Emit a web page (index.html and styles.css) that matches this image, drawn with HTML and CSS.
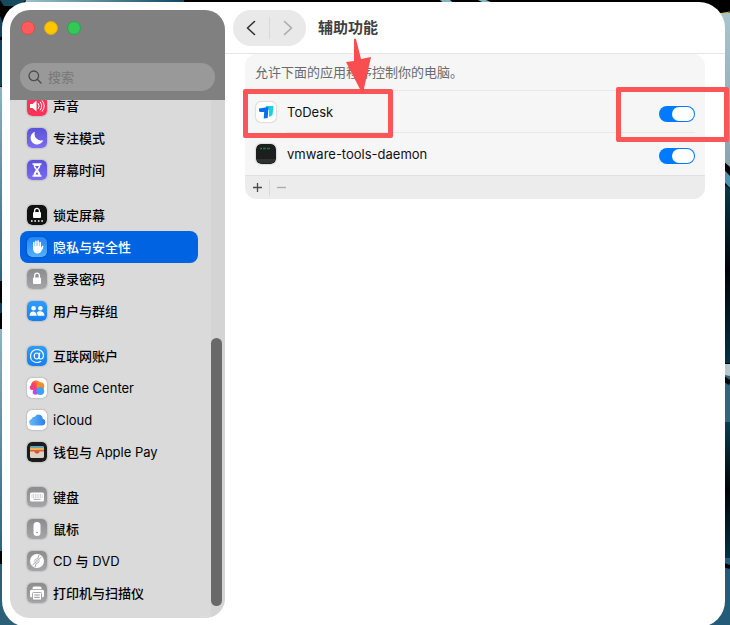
FILE: index.html
```html
<!DOCTYPE html>
<html lang="zh-CN">
<head>
<meta charset="utf-8">
<meta name="viewport" content="width=device-width, initial-scale=1">
<title>辅助功能</title>
<link rel="stylesheet" href="styles.css">
</head>
<body>
<svg class="wallpaper" aria-hidden="true" viewBox="0 0 730 625" preserveAspectRatio="none">
  <defs>
    <linearGradient id="wl" x1="0" y1="0" x2="0" y2="1"><stop offset="0" stop-color="#8fb3c0"/><stop offset="1" stop-color="#2b6480"/></linearGradient>
    <linearGradient id="wr" x1="0" y1="0" x2="0" y2="1"><stop offset="0" stop-color="#a9c4cd"/><stop offset="1" stop-color="#8aa3af"/></linearGradient>
    <linearGradient id="wd" x1="0" y1="0" x2="0" y2="1"><stop offset="0" stop-color="#0b3c50"/><stop offset=".5" stop-color="#000305"/><stop offset="1" stop-color="#063044"/></linearGradient>
    <linearGradient id="wt" x1="0" y1="0" x2="1" y2="0"><stop offset="0" stop-color="#9cc2cc"/><stop offset="1" stop-color="#0d4763"/></linearGradient>
    <linearGradient id="grey" x1="0" y1="0" x2="0" y2="1"><stop offset="0" stop-color="#8c8c8e"/><stop offset="1" stop-color="#a6a6a8"/></linearGradient>
    <linearGradient id="purple" x1="0" y1="0" x2="0" y2="1"><stop offset="0" stop-color="#5a52d8"/><stop offset="1" stop-color="#7c6cf2"/></linearGradient>
    <linearGradient id="blue" x1="0" y1="0" x2="0" y2="1"><stop offset="0" stop-color="#2f9cfb"/><stop offset="1" stop-color="#1480f0"/></linearGradient>
    <linearGradient id="sky" x1="0" y1="0" x2="0" y2="1"><stop offset="0" stop-color="#1f86f6"/><stop offset="1" stop-color="#56b0fd"/></linearGradient>
  </defs>
  <rect width="730" height="625" fill="#000"/>
  <path d="M0 0h26L18 6H4z" fill="#174a5e"/>
  <path d="M26 0h158v6H24z" fill="url(#wt)"/>
  <path d="M440 0h10l6 5h-10zM478 0h8l12 5h-10z" fill="#7fb4c2"/>
  <path d="M0 16q5 8 2 21H0zM0 40h6v46H0z" fill="#11455c"/>
  <path d="M0 87h8v194H0z" fill="url(#wl)"/>
  <path d="M0 303h8v10H0z" fill="#0a4257"/>
  <path d="M0 329h8v222H0z" fill="url(#wl)"/>
  <path d="M0 564h40v61H0z" fill="#2c6079"/>
  <path d="M715 13h15v154l-15-13z" fill="url(#wr)"/>
  <path d="M718 14l12-2" stroke="#c9c043"/>
  <path d="M715 160l15 16v12l-15-16z" fill="#4c96ae"/>
  <path d="M715 177l15 12v174h-15z" fill="url(#wd)"/>
  <path d="M715 364h15v58h-15z" fill="#38627a"/>
  <path d="M715 364h15v12l-15-3z" fill="#b7c9cf"/>
  <path d="M715 373l15 10" stroke="#02080c" stroke-width="5"/>
  <path d="M715 422h15v136h-15z" fill="url(#wd)"/>
  <path d="M700 558h30v67h-30z" fill="#245b78"/>
  <path d="M715 562l15 5" stroke="#000" stroke-width="4"/>
</svg>

<div class="window">
  <aside class="sidebar">
    <header class="sidebar-head">
      <div class="lights">
        <button class="light close" aria-label="关闭"></button>
        <button class="light minimize" aria-label="最小化"></button>
        <button class="light expand" aria-label="全屏"></button>
      </div>
      <label class="search">
        <svg width="14" height="14" viewBox="0 0 14 14" fill="none" stroke="#4c4c4c" stroke-width="1.3" stroke-linecap="round" aria-hidden="true"><circle cx="5.8" cy="5.8" r="4.8"/><path d="M9.3 9.3L13 13"/></svg>
        <input type="search" placeholder="搜索" aria-label="搜索">
      </label>
    </header>
    <nav class="nav">
      <div class="group">
        <a class="item" href="#"><svg class="icon" viewBox="0 0 20 20" aria-hidden="true"><rect width="20" height="20" rx="5" fill="#fb3359"/><path d="M3 8h2.5L9.5 4.5v11L5.500 12H3z" fill="#fff"/><path d="M11.300 7.500q2 2.500 0 5M13.300 6q3 4 0 8M15.300 4.800q4 5.200 0 10.400" fill="none" stroke="#fff" stroke-width="1" stroke-linecap="round"/></svg>声音</a>
        <a class="item" href="#"><svg class="icon" viewBox="0 0 20 20" aria-hidden="true"><rect width="20" height="20" rx="5" fill="url(#purple)"/><path d="M8 3.800A6.500 6.500 0 1 0 16.200 12.200 6.500 6.500 0 0 1 8 3.800z" fill="#fff"/></svg>专注模式</a>
        <a class="item" href="#"><svg class="icon" viewBox="0 0 20 20" aria-hidden="true"><rect width="20" height="20" rx="5" fill="url(#purple)"/><path d="M6 4h8M6 16h8" stroke="#fff" stroke-width="1.500" stroke-linecap="round"/><path d="M6.500 4h7c0 3-1 4-2.500 6 1.500 2 2.500 3 2.500 6h-7c0-3 1-4 2.500-6C7.500 8 6.500 7 6.500 4z" fill="#fff"/><path d="M8 6h4L10 9zM10 12l1.500 2.500h-3z" fill="#6557e0"/></svg>屏幕时间</a>
      </div>
      <div class="group">
        <a class="item" href="#"><svg class="icon" viewBox="0 0 20 20" aria-hidden="true"><rect width="20" height="20" rx="5" fill="#111"/><path d="M7.600 7.500V5.800a2.400 2.400 0 0 1 4.800 0v1.700" fill="none" stroke="#fff" stroke-width="1.300"/><rect x="6" y="7" width="8" height="6" rx="1" fill="#fff"/><path d="M4 16h1.600M7.400 16H9M10.900 16h1.600M14.300 16h1.600" stroke="#fff" stroke-width="1.600"/></svg>锁定屏幕</a>
        <a class="item selected" href="#" aria-current="page"><svg class="icon" viewBox="0 0 20 20" aria-hidden="true"><rect width="20" height="20" rx="5" fill="url(#sky)"/><path d="M6.800 10V5.800M8.900 9V4.200M11.100 9V4M13.200 10V5.500M15 11.500l.6-2" stroke="#fff" stroke-width="1.600" stroke-linecap="round"/><path d="M6 9h8v2l1.800-1.500c-.4 3.500-1.800 7-5.300 7C7.500 16.500 6 14 6 11z" fill="#fff"/></svg>隐私与安全性</a>
        <a class="item" href="#"><svg class="icon" viewBox="0 0 20 20" aria-hidden="true"><rect width="20" height="20" rx="5" fill="url(#grey)"/><path d="M7.600 9V6.500a2.400 2.400 0 0 1 4.800 0V9" fill="none" stroke="#fff" stroke-width="1.300"/><rect x="6" y="8.500" width="8" height="6.500" rx="1" fill="#fff"/></svg>登录密码</a>
        <a class="item" href="#"><svg class="icon" viewBox="0 0 20 20" aria-hidden="true"><rect width="20" height="20" rx="5" fill="url(#blue)"/><g fill="#fff"><circle cx="6.600" cy="7.300" r="2.300"/><circle cx="13.400" cy="7.300" r="2.300"/><path d="M2.500 14.700c0-5.500 7.200-5.500 7.200 0zM10.600 14.700c0-1.300-.3-2.200-.9-3 2.200-2.600 7.800-1.700 7.800 3z"/></g></svg>用户与群组</a>
      </div>
      <div class="group">
        <a class="item" href="#"><svg class="icon" viewBox="0 0 20 20" aria-hidden="true"><rect width="20" height="20" rx="5" fill="url(#blue)"/><g fill="none" stroke="#fff" stroke-width="1.200" stroke-linecap="round"><ellipse cx="9.700" cy="10" rx="2.500" ry="3"/><path d="M12.700 7l-.6 4.300c-.3 2.500 4.400 2.500 4.400-1.500C16.500 6 13.800 3.500 10 3.500S3.500 6.200 3.500 10s2.700 6.500 6.500 6.500c1.500 0 2.700-.3 3.700-.9"/></g></svg>互联网账户</a>
        <a class="item" href="#"><svg class="icon" viewBox="0 0 20 20" aria-hidden="true"><defs><linearGradient id="gc" x1="0" y1="1" x2="1" y2="0"><stop offset="0" stop-color="#f829a6"/><stop offset=".5" stop-color="#fa4b50"/><stop offset="1" stop-color="#ffb11b"/></linearGradient></defs><rect width="20" height="20" rx="5" fill="#fff"/><circle cx="9" cy="7.500" r="5" fill="url(#gc)"/><circle cx="13.500" cy="8" r="3.800" fill="#fb8b25"/><circle cx="5.300" cy="9.500" r="2.500" fill="#f93a86"/><circle cx="8.500" cy="14" r="2.800" fill="#c347dd"/><circle cx="13.300" cy="13" r="3.900" fill="#3da1f6"/></svg><span class="latin">Game Center</span></a>
        <a class="item" href="#"><svg class="icon" viewBox="0 0 20 20" aria-hidden="true"><defs><linearGradient id="ic"><stop offset="0" stop-color="#66baf8"/><stop offset="1" stop-color="#2a80ec"/></linearGradient></defs><rect width="20" height="20" rx="5" fill="#fff"/><path d="M5.500 15.500a3.300 3.300 0 0 1-.8-6.500 3 3 0 0 1 3.200-2.300 4.200 4.200 0 0 1 7.800 2.100 3.400 3.400 0 0 1-.8 6.700z" fill="url(#ic)"/></svg><span class="latin">iCloud</span></a>
        <a class="item" href="#"><svg class="icon" viewBox="0 0 20 20" aria-hidden="true"><rect width="20" height="20" rx="5" fill="#1c1c1c"/><rect x="3" y="4" width="14" height="12" rx="2" fill="#d8d1c2"/><path d="M3 6q0-2 2-2h10q2 0 2 2z" fill="#62a6b8"/><path d="M3 6h14v2H3z" fill="#e9b44c"/><path d="M3 8h14v2H3z" fill="#e45a45"/><path d="M3 9.500h4c.8 0 1 2 3 2s2.200-2 3-2h4V14q0 2-2 2H5q-2 0-2-2z" fill="#ddd4c4"/><path d="M7.500 10h5q-1 1.500-2.500 1.500T7.500 10z" fill="#d9473b"/></svg><span>钱包与<span class="latin"> Apple Pay</span></span></a>
      </div>
      <div class="group">
        <a class="item" href="#"><svg class="icon" viewBox="0 0 20 20" aria-hidden="true"><rect width="20" height="20" rx="5" fill="url(#grey)"/><rect x="3" y="5.500" width="14" height="9" rx="1.500" fill="#fff"/><path d="M4.500 8h11M4.500 10h11" stroke="#aaa" stroke-dasharray="1 .7"/><path d="M6.500 12.300h7" stroke="#aaa"/></svg>键盘</a>
        <a class="item" href="#"><svg class="icon" viewBox="0 0 20 20" aria-hidden="true"><rect width="20" height="20" rx="5" fill="url(#grey)"/><rect x="6.500" y="3" width="7" height="14" rx="3.500" fill="#fff"/><circle cx="10" cy="13.500" r=".8" fill="#888"/></svg>鼠标</a>
        <a class="item" href="#"><svg class="icon" viewBox="0 0 20 20" aria-hidden="true"><rect width="20" height="20" rx="5" fill="url(#grey)"/><circle cx="10" cy="10" r="7" fill="#fff"/><path d="M10 10l2-6M10 10l4.500-4M10 10l-2 6M10 10l-4.500 4" stroke="#aaa"/><circle cx="10" cy="10" r="2.200" fill="#fff" stroke="#999" stroke-width=".7"/><circle cx="10" cy="10" r=".8" fill="#929294"/></svg><span><span class="latin">CD </span>与<span class="latin"> DVD</span></span></a>
        <a class="item" href="#"><svg class="icon" viewBox="0 0 20 20" aria-hidden="true"><rect width="20" height="20" rx="5" fill="url(#grey)"/><path d="M5.500 6V5q0-1.500 1.500-1.500h6q1.500 0 1.500 1.500v1z" fill="#fff"/><rect x="3" y="6.800" width="14" height="7.500" rx="1.500" fill="#fff"/><rect x="5.500" y="9.500" width="9" height="7.500" rx="1" fill="#fff" stroke="#929294" stroke-width=".8"/><path d="M7.300 12h5.400M7.300 14.300h5.400" stroke="#929294"/></svg>打印机与扫描仪</a>
      </div>
    </nav>
    <div class="scrollbar" aria-hidden="true"><div class="thumb"></div></div>
  </aside>

  <main class="content">
    <header class="toolbar">
      <div class="history">
        <button aria-label="后退"><svg width="10" height="16" viewBox="0 0 10 16" fill="none" stroke="#303030" stroke-width="1.600" stroke-linecap="round" stroke-linejoin="round" aria-hidden="true"><path d="M8.500 1.500L1.500 8l7 6.500"/></svg></button>
        <button aria-label="前进"><svg width="10" height="16" viewBox="0 0 10 16" fill="none" stroke="#ababab" stroke-width="1.600" stroke-linecap="round" stroke-linejoin="round" aria-hidden="true"><path d="M1.500 1.500l7 6.500-7 6.500"/></svg></button>
      </div>
      <h1>辅助功能</h1>
      <svg class="arrow" width="28" height="56" viewBox="0 0 28 56" aria-hidden="true"><path d="M9 1q1-1 2 0l5 20 10-2-8 36h-1L1 24l8-1z" fill="#fa4d4f"/></svg>
    </header>
    <section class="panel">
      <p class="hint">允许下面的应用程序控制你的电脑。</p>
      <div class="app">
        <svg class="app-icon" viewBox="0 0 20 20" aria-hidden="true"><rect width="20" height="20" rx="5" fill="#fff"/><path d="M10 4h7.500l-1 9-3.500 2V7.500H9z" fill="#16d3dc"/><path d="M3 6.500L12.500 5l-.8 11-4 .5.500-6.500H4q-1.500-1-1-3.500z" fill="#086ff5"/></svg>
        <label for="todesk">ToDesk</label>
        <input class="switch" type="checkbox" role="switch" id="todesk" checked>
        <span class="mark mark-name"></span>
        <span class="mark mark-switch"></span>
      </div>
      <div class="app">
        <svg class="app-icon" viewBox="0 0 20 20" aria-hidden="true"><rect width="20" height="20" rx="5" fill="#1d1f1e"/><path d="M1 15h18v1q-1 3-4 3H5q-3 0-4-3z" fill="#303231"/><path d="M4 4.500h2m1 0h3m1 0h3" stroke="#187b38" stroke-width="1.500"/></svg>
        <label for="vmware">vmware-tools-daemon</label>
        <input class="switch" type="checkbox" role="switch" id="vmware" checked>
      </div>
      <footer class="actions">
        <button aria-label="添加"><svg width="9" height="9" viewBox="0 0 9 9" stroke="#4a4a4a" stroke-width="1.300" aria-hidden="true"><path d="M0 4.500h9M4.500 0v9"/></svg></button>
        <button aria-label="移除"><svg width="9" height="9" viewBox="0 0 9 9" stroke="#aaa" stroke-width="1.300" aria-hidden="true"><path d="M0 4.500h9"/></svg></button>
      </footer>
    </section>
  </main>
</div>
</body>
</html>
```
FILE: styles.css
```css
* {
  box-sizing: border-box;
}

body {
  margin: 0;
  height: 100vh;
  padding: 2px 5px 0 2px;
  overflow: hidden;
  font: 13px/20px Inter, "Noto Sans CJK SC", sans-serif;
  color: #111;
}

button {
  display: flex;
  align-items: center;
  justify-content: center;
  margin: 0;
  padding: 0;
  border: 0;
  background: none;
}

.wallpaper {
  position: fixed;
  inset: 0;
  z-index: -1;
  width: 100%;
  height: 100%;
}

.window {
  display: flex;
  height: 100vh;
  padding: 8px 0 9px 8px;
  border-radius: 26px;
  background: #fff;
}

.sidebar {
  position: relative;
  display: flex;
  flex-direction: column;
  flex: 0 0 215px;
  overflow: hidden;
  border-radius: 20px;
  background: #dadada;
}

.sidebar-head {
  position: relative;
  z-index: 1;
  display: flex;
  flex-direction: column;
  flex: none;
  justify-content: space-between;
  height: 90px;
  padding: 11px 10px 9px;
  background: #808080;
}

.lights {
  display: flex;
  gap: 9px;
  padding-left: 1px;
}

.light {
  width: 14px;
  height: 14px;
  border: 1px solid #e1484b;
  border-radius: 50%;
  background: #ff5b5e;
}

.light.minimize {
  border-color: #dfa80a;
  background: #fec700;
}

.light.expand {
  border-color: #23a944;
  background: #34c759;
}

.search {
  display: flex;
  align-items: center;
  gap: 6px;
  height: 28px;
  padding: 0 8px;
  border-radius: 14px;
  background: #999;
}

.search input {
  flex: 1;
  min-width: 0;
  padding: 0;
  border: 0;
  outline: 0;
  background: none;
  font: inherit;
}

.search input::placeholder {
  color: #777;
}

.nav {
  display: flex;
  flex-direction: column;
  gap: 13px;
  margin-top: -10px;
  padding: 0 27px 0 10px;
}

.item {
  display: flex;
  align-items: center;
  gap: 6px;
  height: 32px;
  padding: 0 7px;
  border-radius: 8px;
  color: #000;
  font-weight: 500;
  text-decoration: none;
  white-space: nowrap;
}

.item.selected {
  background: #0063e1;
  color: #fff;
}

.latin {
  font-weight: 400;
}

.icon,
.app-icon {
  flex: none;
  width: 20px;
  height: 20px;
  border-radius: 5px;
  box-shadow: 0 0 2px rgb(0 0 0 / 35%);
}

.scrollbar {
  position: absolute;
  top: 90px;
  right: 0;
  bottom: 0;
  display: flex;
  align-items: flex-end;
  width: 14px;
  padding: 0 3px 12px 0;
  background: #d4d4d4;
}

.thumb {
  flex: 1;
  height: 53%;
  border-radius: 6px;
  background: #696969;
}

.content {
  flex: 1;
  min-width: 0;
}

.toolbar {
  position: relative;
  display: flex;
  align-items: center;
  gap: 12px;
  height: 44px;
  padding: 0 8px 8px;
  border-bottom: 1px solid #e5e5e5;
}

.history {
  display: flex;
  align-items: center;
  width: 73px;
  height: 36px;
  border-radius: 18px;
  background: #e9e9e9;
}

.history button {
  flex: 1;
  height: 22px;
}

.history button + button {
  border-left: 1px solid #d9d9d9;
}

h1 {
  margin: 0;
  color: #404040;
  font-size: 15px;
  line-height: 20px;
}

.panel {
  margin: 0 20px;
  border-radius: 12px;
  background: #f6f6f6;
}

.hint {
  height: 37px;
  margin: 0;
  padding: 8px 10px;
  border-bottom: 1px solid #e8e8e8;
  color: #6b6b6b;
}

.app {
  position: relative;
  display: flex;
  align-items: center;
  gap: 11px;
  height: 42px;
  padding: 0 10px 0 11px;
}

.app + .app::before {
  content: "";
  position: absolute;
  top: -1px;
  left: 42px;
  right: 10px;
  height: 1px;
  background: #e8e8e8;
}

.app label {
  flex: 1;
}

.switch {
  display: flex;
  justify-content: flex-end;
  width: 36px;
  height: 16px;
  margin: 3px 0 0;
  padding: 1px;
  border-radius: 8px;
  background: #007aff;
  appearance: none;
}

.switch::before {
  content: "";
  width: 22px;
  border-radius: 7px;
  background: #fff;
}

.switch:not(:checked) {
  justify-content: flex-start;
  background: #c8c8c8;
}

.actions {
  display: flex;
  align-items: center;
  height: 24px;
  border-top: 1px solid #e0e0e0;
  border-radius: 0 0 12px 12px;
  background: #ececec;
}

.actions button {
  width: 24px;
  height: 16px;
}

.actions button + button {
  border-left: 1px solid #dadada;
}

.arrow {
  position: absolute;
  top: 28px;
  left: 120px;
  z-index: 2;
}

.mark {
  position: absolute;
  z-index: 1;
  border: 5px solid #fa5557;
  border-radius: 2px;
  pointer-events: none;
}

.mark-name {
  top: -2px;
  left: -2px;
  width: 150px;
  height: 49px;
}

.mark-switch {
  top: -4px;
  right: -24px;
  width: 113px;
  height: 55px;
}
```
